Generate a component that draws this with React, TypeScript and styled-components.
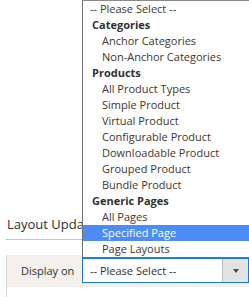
import styled, { createGlobalStyle } from "styled-components"

const GlobalStyle = createGlobalStyle`
  html, body {
    margin: 0;
    padding: 0;
    background: #fff;
    font-family: "Open Sans", "Liberation Sans", sans-serif;
  }
`

const Page = styled.div`
  position: relative;
  width: 249px;
  height: 297px;
  overflow: hidden;
  padding-left: 6px;
  box-sizing: border-box;
`

const SectionTitle = styled.div`
  margin-top: 214px;
  padding: 0 0 5px 1px;
  border-bottom: 1px solid #cac3b4;
  font-size: 13px;
  line-height: 20px;
  color: #303030;
  white-space: nowrap;
`

const Fieldset = styled.div`
  margin-top: 15px;
  border-left: 1px solid #d6d6d6;
  height: 60px;
`

const FieldRow = styled.div`
  display: grid;
  grid-template-columns: 75px 1fr;
  align-items: center;
  background: #f4f1ec;
  padding: 3px 0 4px;
`

const Label = styled.div`
  padding-left: 14px;
  font-size: 11px;
  color: #303030;
  white-space: nowrap;
`

const SelectBox = styled.div`
  display: flex;
  height: 25px;
  box-sizing: border-box;
  border: 1px solid #1979d8;
  background: #fff;
`

const SelectValue = styled.div`
  flex: 1;
  display: flex;
  align-items: center;
  padding-left: 7px;
  font-size: 11px;
  color: #303030;
  white-space: nowrap;
`

const ArrowButton = styled.div`
  width: 25px;
  display: flex;
  align-items: center;
  justify-content: center;
  background: #e3e3e3;
  border-left: 1px solid #c2c2c2;
`

const Arrow = styled.div`
  width: 0;
  height: 0;
  border-left: 3px solid transparent;
  border-right: 3px solid transparent;
  border-top: 4px solid #514943;
`

const Dropdown = styled.div`
  position: absolute;
  top: 0;
  left: 82px;
  width: 170px;
  height: 258px;
  box-sizing: border-box;
  border: 1px solid #6f6f6f;
  border-top-color: #8a8a8a;
  background: #fff;
`

const Option = styled.div<{ $indent: number; $group?: boolean; $active?: boolean }>`
  height: 16px;
  line-height: 16px;
  padding-left: ${(p) => p.$indent}px;
  font-size: 11px;
  font-weight: ${(p) => (p.$group ? 700 : 400)};
  color: ${(p) => (p.$active ? "#fff" : p.$group ? "#303030" : "#41362f")};
  background: ${(p) => (p.$active ? "#4d8cf5" : "transparent")};
  white-space: nowrap;
`

type Item = { label: string; kind: "placeholder" | "group" | "option"; active?: boolean }

const items: Item[] = [
  { label: "-- Please Select --", kind: "placeholder" },
  { label: "Categories", kind: "group" },
  { label: "Anchor Categories", kind: "option" },
  { label: "Non-Anchor Categories", kind: "option" },
  { label: "Products", kind: "group" },
  { label: "All Product Types", kind: "option" },
  { label: "Simple Product", kind: "option" },
  { label: "Virtual Product", kind: "option" },
  { label: "Configurable Product", kind: "option" },
  { label: "Downloadable Product", kind: "option" },
  { label: "Grouped Product", kind: "option" },
  { label: "Bundle Product", kind: "option" },
  { label: "Generic Pages", kind: "group" },
  { label: "All Pages", kind: "option" },
  { label: "Specified Page", kind: "option", active: true },
  { label: "Page Layouts", kind: "option" },
]

const indentFor = { placeholder: 7, group: 9, option: 19 }

export default function App() {
  return (
    <>
      <GlobalStyle />
      <Page>
        <SectionTitle>Layout Updates</SectionTitle>
        <Fieldset>
          <FieldRow>
            <Label>Display on</Label>
            <SelectBox>
              <SelectValue>-- Please Select --</SelectValue>
              <ArrowButton>
                <Arrow />
              </ArrowButton>
            </SelectBox>
          </FieldRow>
        </Fieldset>
        <Dropdown>
          {items.map((it) => (
            <Option
              key={it.label}
              $indent={indentFor[it.kind]}
              $group={it.kind === "group"}
              $active={it.active}
            >
              {it.label}
            </Option>
          ))}
        </Dropdown>
      </Page>
    </>
  )
}
